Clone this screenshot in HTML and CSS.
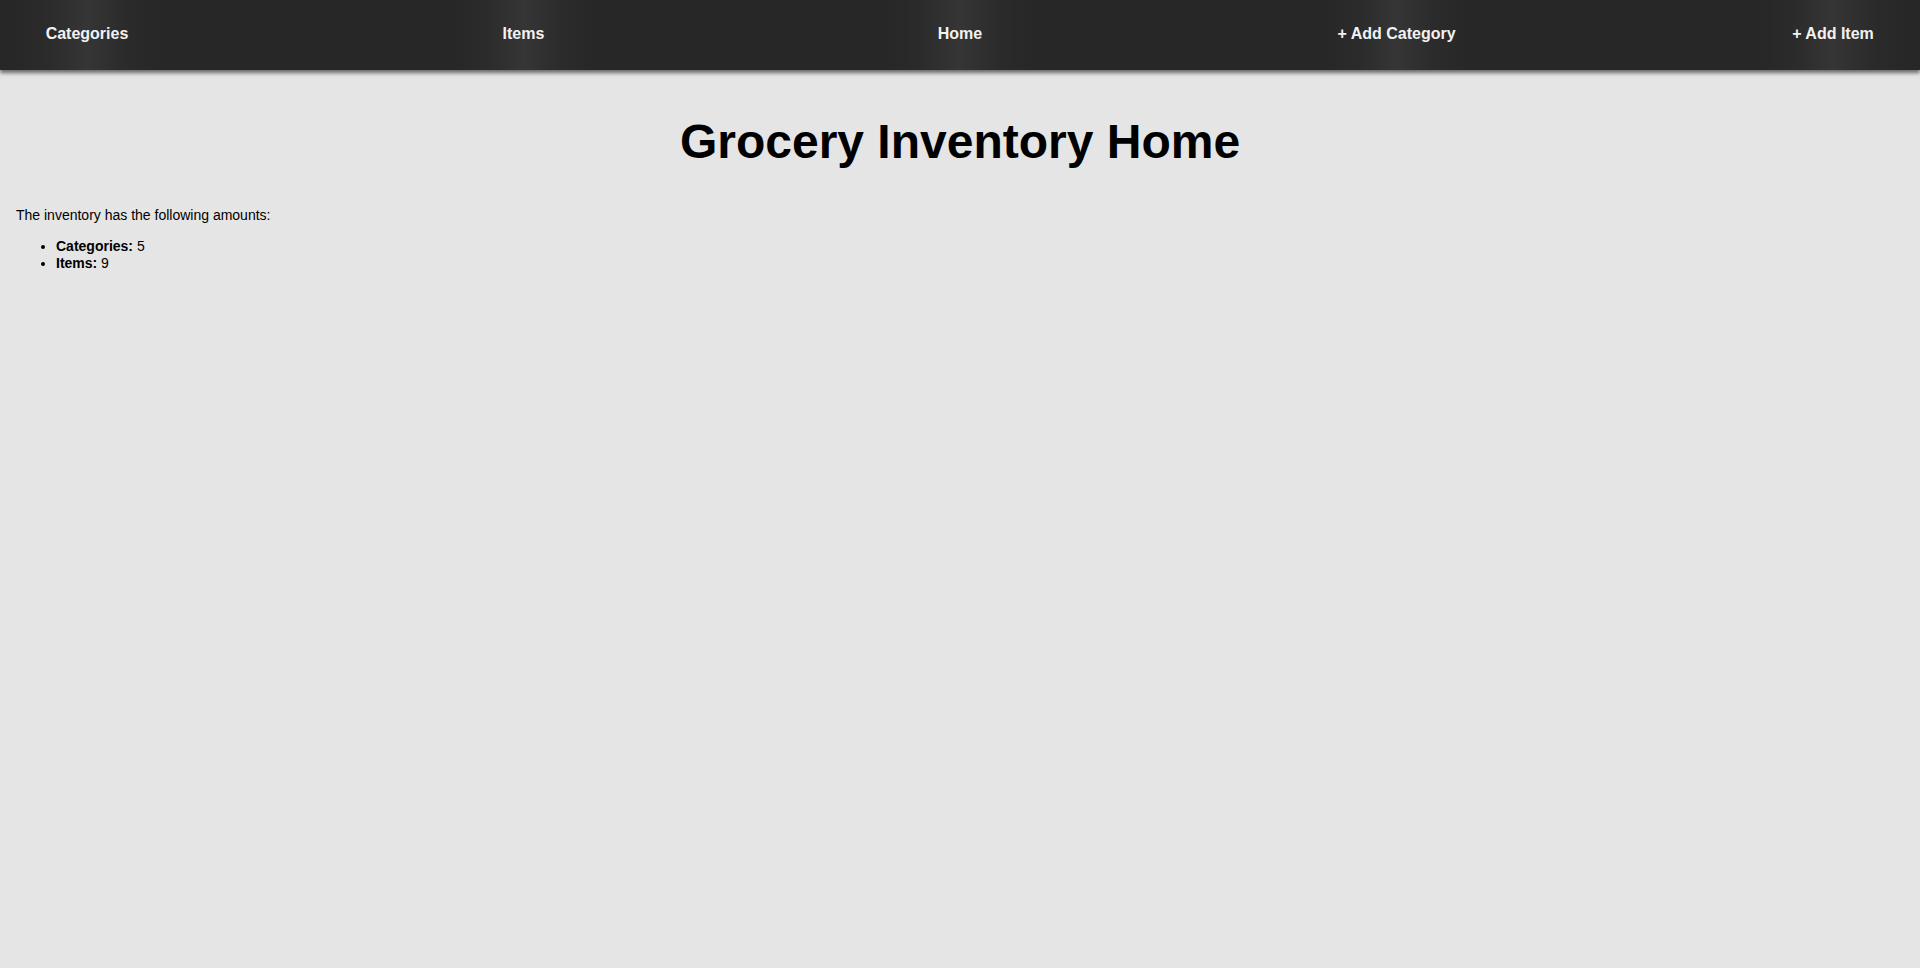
FILE: index.html
```html
<!DOCTYPE html>
<html lang="en">
<head>
<meta charset="utf-8">
<title>Grocery Inventory Home</title>
<link rel="stylesheet" href="styles.css">
</head>
<body>
<nav class="nav">
  <a class="nav-link" href="#">Categories</a>
  <a class="nav-link" href="#">Items</a>
  <a class="nav-link" href="#">Home</a>
  <a class="nav-link" href="#">+ Add Category</a>
  <a class="nav-link" href="#">+ Add Item</a>
</nav>
<main class="content">
  <h1 class="title">Grocery Inventory Home</h1>
  <p class="intro">The inventory has the following amounts:</p>
  <ul class="amounts">
    <li><strong>Categories:</strong> 5</li>
    <li><strong>Items:</strong> 9</li>
  </ul>
</main>
</body>
</html>
```

FILE: styles.css
```css
html, body {
  margin: 0;
  padding: 0;
}

body {
  background: #e5e5e5;
  color: #000;
  font-family: "Liberation Sans", Arial, Helvetica, sans-serif;
  font-size: 14px;
  min-height: 968px;
}

.nav {
  display: flex;
  justify-content: space-between;
  align-items: stretch;
  height: 70px;
  padding: 0 12px;
  background: #272727;
  box-shadow: 0 3px 4px rgba(0, 0, 0, 0.55);
}

.nav-link {
  width: 150px;
  box-sizing: border-box;
  padding-bottom: 2px;
  display: flex;
  align-items: center;
  justify-content: center;
  white-space: nowrap;
  color: #f2f2f2;
  font-size: 16px;
  font-weight: bold;
  text-decoration: none;
  background: linear-gradient(90deg, rgba(255,255,255,0) 0%, rgba(255,255,255,0.02) 25%, rgba(255,255,255,0.065) 50%, rgba(255,255,255,0.02) 75%, rgba(255,255,255,0) 100%);
}

.content {
  padding: 0 16px;
}

.title {
  margin: 44px 0 38px;
  text-align: center;
  font-size: 48px;
  font-weight: bold;
}

.intro {
  margin: 14px 0;
}

.amounts {
  margin: 15px 0 14px;
  padding-left: 40px;
  line-height: 17px;
}
```
